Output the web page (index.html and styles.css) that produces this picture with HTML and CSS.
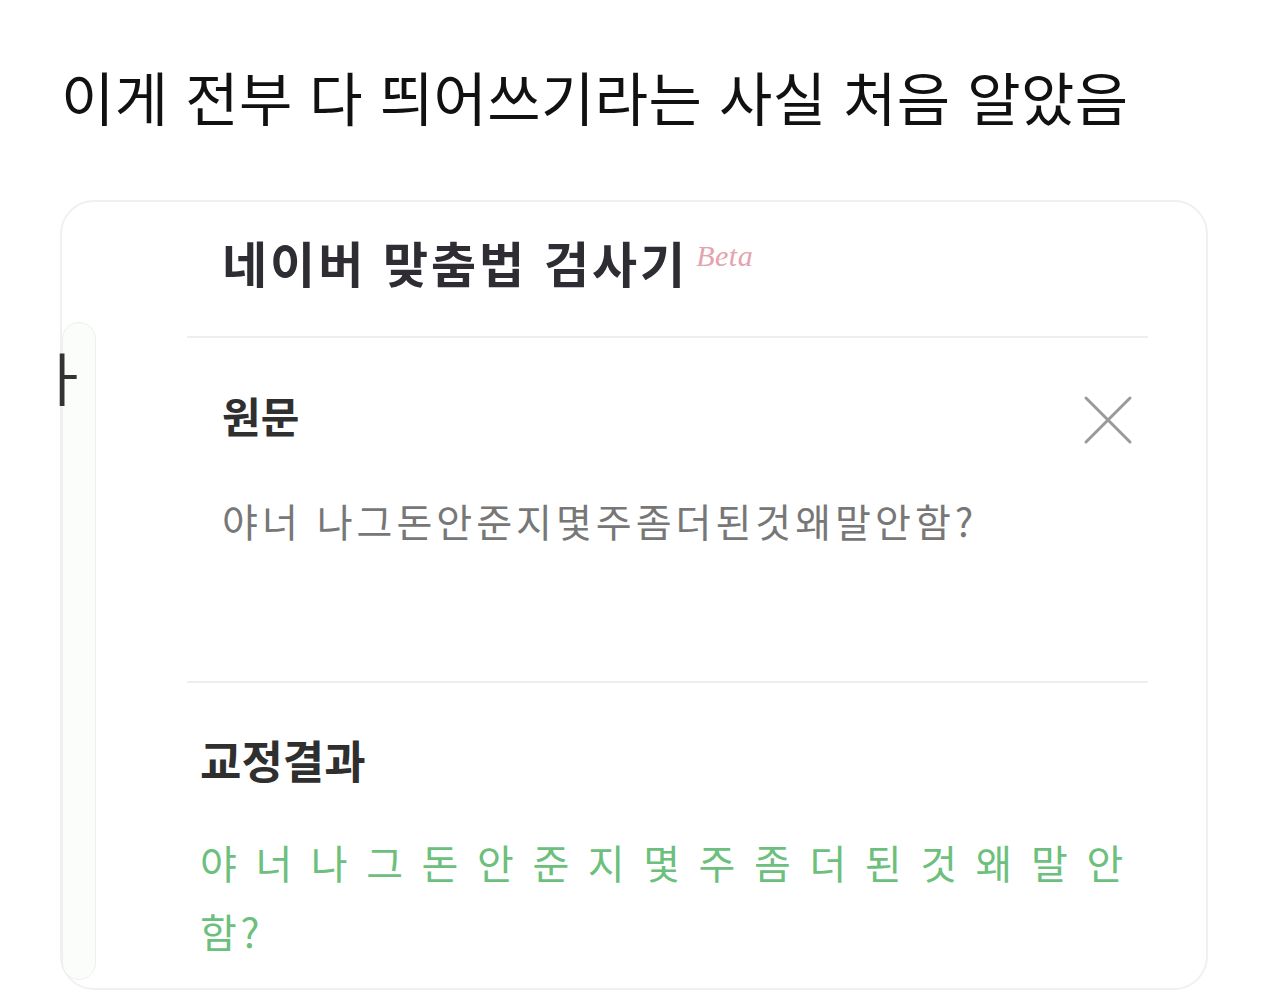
FILE: index.html
```html
<!DOCTYPE html>
<html lang="ko">
<head>
<meta charset="utf-8">
<link rel="stylesheet" href="styles.css">
</head>
<body>
<h1 class="headline">이게 전부 다 띄어쓰기라는 사실 처음 알았음</h1>
<div class="card">
  <div class="side-strip"></div>
  <span class="side-glyph">ㅏ</span>
  <div class="panel">
    <div class="panel-head">
      <span class="panel-title">네이버 맞춤법 검사기</span><span class="beta">Beta</span>
    </div>
    <section class="source">
      <div class="row">
        <h2 class="label">원문</h2>
        <svg class="close" width="50" height="50" viewBox="0 0 50 50" aria-hidden="true">
          <path d="M3 3 L47 47 M47 3 L3 47" stroke="#9a9a9a" stroke-width="3" fill="none" stroke-linecap="round"/>
        </svg>
      </div>
      <p class="source-text">야너 나그돈안준지몇주좀더된것왜말안함?</p>
    </section>
    <section class="result">
      <h2 class="label label-result">교정결과</h2>
      <p class="result-text">야 너 나 그 돈 안 준 지 몇 주 좀 더 된 것 왜 말 안 함?</p>
    </section>
  </div>
</div>
</body>
</html>
```

FILE: styles.css
```css
* { box-sizing: border-box; }

html, body {
  margin: 0;
  padding: 0;
  background: #ffffff;
}

body {
  font-family: "Noto Sans CJK KR", "Noto Sans", sans-serif;
  color: #111;
  height: 993px;
  overflow: hidden;
}

.headline {
  margin: 66px 0 0 61px;
  font-size: 58px;
  line-height: 60px;
  font-weight: 400;
  letter-spacing: 0.4px;
  color: #111;
}

.card {
  position: relative;
  margin: 74px 0 0 60px;
  width: 1148px;
  height: 790px;
  border: 2px solid #f0f0f0;
  border-radius: 34px;
  background: #fff;
}

.side-strip {
  position: absolute;
  left: 0;
  top: 120px;
  width: 34px;
  height: 658px;
  border: 1px solid #eef0ee;
  border-radius: 22px;
  background: #fbfdfb;
}

.side-glyph {
  position: absolute;
  left: -25px;
  top: 134px;
  font-size: 58px;
  line-height: 80px;
  color: #333;
}

.panel {
  margin-left: 125px;
  width: 961px;
}

.panel-head {
  padding: 30px 0 0 35px;
  height: 136px;
  border-bottom: 2px solid #eeeeee;
  display: flex;
  align-items: flex-start;
}

.panel-title {
  font-size: 49px;
  line-height: 60px;
  font-weight: 700;
  letter-spacing: 3px;
  color: #2f2d33;
}

.beta {
  font-family: "Liberation Serif", serif;
  font-style: italic;
  font-size: 30px;
  line-height: 30px;
  margin: 9px 0 0 8px;
  color: #e4a3ae;
  letter-spacing: 0.5px;
}

.source {
  padding: 52px 15px 0 35px;
  height: 345px;
  border-bottom: 2px solid #eeeeee;
}

.row {
  display: flex;
  justify-content: space-between;
  align-items: center;
  height: 50px;
}

.label {
  margin: 0;
  font-size: 42px;
  line-height: 50px;
  font-weight: 700;
  color: #2f2f2f;
}

.close {
  display: block;
  margin-top: 10px;
}

.source-text {
  margin: 55px 0 0 0;
  font-size: 39px;
  line-height: 50px;
  letter-spacing: 4px;
  color: #777;
}

.result {
  padding: 52px 0 0 13px;
}

.label-result {
  font-size: 45px;
}

.result-text {
  margin: 43px 0 0 0;
  font-size: 40px;
  line-height: 69px;
  letter-spacing: 3.7px;
  color: #6cbf7c;
}
```
